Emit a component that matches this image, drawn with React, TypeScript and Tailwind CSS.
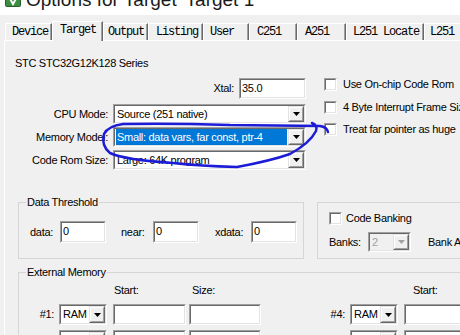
import React from "react";

type BoxProps = {
  className?: string;
  inner?: string;
  children?: React.ReactNode;
};

// classic win32 sunken edge
function Sunken({ className = "", inner = "", children }: BoxProps) {
  return (
    <div className={`shrink-0 border border-t-[#a0a0a0] border-l-[#a0a0a0] border-r-white border-b-white ${className}`}>
      <div className={`w-full h-full border border-t-[#696969] border-l-[#696969] border-r-[#e3e3e3] border-b-[#e3e3e3] ${inner}`}>
        {children}
      </div>
    </div>
  );
}

function DropButton({ disabled }: { disabled?: boolean }) {
  return (
    <div className="w-[16px] h-full shrink-0 border border-t-[#e3e3e3] border-l-[#e3e3e3] border-r-[#696969] border-b-[#696969] bg-[#f0f0f0]">
      <div className="w-full h-full border border-t-white border-l-white border-r-[#a0a0a0] border-b-[#a0a0a0] flex items-center justify-center">
        <svg width="7" height="4" viewBox="0 0 7 4">
          <path d="M0 0h7L3.5 4z" fill={disabled ? "#a0a0a0" : "#000"} />
        </svg>
      </div>
    </div>
  );
}

type ComboProps = {
  className: string;
  text: string;
  selected?: boolean;
  disabled?: boolean;
};

function Combo({ className, text, selected, disabled }: ComboProps) {
  return (
    <Sunken className={className} inner={`flex ${disabled ? "bg-[#f0f0f0]" : "bg-white"}`}>
      <div
        className={`flex-1 min-w-0 flex items-center mx-[1px] pl-[1px] whitespace-nowrap overflow-hidden ${
          selected ? "bg-[#0078d7] text-white" : ""
        } ${disabled ? "text-[#a0a0a0]" : ""}`}
      >
        {text}
      </div>
      <DropButton disabled={disabled} />
    </Sunken>
  );
}

function Input({ className, text = "" }: { className: string; text?: string }) {
  return (
    <Sunken className={className} inner="bg-white flex items-center pl-[1px] pb-[1px]">
      {text}
    </Sunken>
  );
}

function Check() {
  return <Sunken className="w-[13px] h-[13px]" inner="bg-white" />;
}

function Legend({ children }: { children: React.ReactNode }) {
  return <div className="-mt-[7px] ml-[7px] px-[1px] w-fit h-[13px] bg-[#f0f0f0] whitespace-nowrap">{children}</div>;
}

const tabs = [
  { label: "Device", cls: "w-[47px] pl-[6px]" },
  { label: "Target", cls: "w-[51px] pl-[7px]", active: true },
  { label: "Output", cls: "w-[45px] pl-[4px]" },
  { label: "Listing", cls: "w-[55px] pl-[7px]" },
  { label: "User", cls: "w-[46px] pl-[6px]" },
  { label: "C251", cls: "w-[48px] pl-[7px]" },
  { label: "A251", cls: "w-[49px] pl-[7px]" },
  { label: "L251 Locate", cls: "w-[78px] pl-[6px]" },
  { label: "L251", cls: "w-[50px] pl-[5px]" },
];

export default function App() {
  return (
    <div className="relative w-[460px] h-[335px] overflow-hidden bg-[#f0f0f0] font-['Liberation_Sans',Arial,sans-serif] text-[11px] leading-[13px] tracking-[-0.3px] text-black">
      {/* Title bar (cut off at the top) */}
      <div className="h-[15px] bg-white overflow-hidden flex items-start">
        <svg className="ml-[5px] -mt-[9px] shrink-0" width="16" height="16" viewBox="0 0 16 16">
          <rect x="0.5" y="0.5" width="15" height="15" rx="1" fill="#3c8d3f" stroke="#25602a" />
          <path d="M4 6l4 7 4-7" stroke="#fff" strokeWidth="2" fill="none" />
        </svg>
        <span className="ml-[5px] -mt-[10px] text-[19px] leading-[20px] tracking-normal text-[#1a1a1a] whitespace-nowrap">
          Options for Target 'Target 1'
        </span>
      </div>

      {/* Tabs */}
      <div className="mt-[6px] pl-[5px] h-[19px] flex items-end font-['Liberation_Mono',monospace] text-[12px] tracking-[-1.2px]">
        {tabs.map((t) => (
          <div
            key={t.label}
            className={`${t.cls} shrink-0 flex items-center whitespace-nowrap bg-[#f0f0f0] border-t border-l border-r border-t-white border-l-white border-r-[#696969] shadow-[inset_-1px_0_0_#a0a0a0] ${
              t.active ? "relative z-10 h-[20px] -mb-[1px] pb-[3px]" : "h-[17px]"
            }`}
          >
            {t.label}
          </div>
        ))}
      </div>

      {/* Tab page */}
      <div className="ml-[4px] h-[300px] border-l border-t border-white">
        <div className="ml-[10px] mt-[16px] h-[13px] whitespace-nowrap">STC STC32G12K128 Series</div>

        <div className="mt-[8px] flex">
          <div className="w-[301px] shrink-0 flex flex-col">
            <div className="h-[21px] flex justify-end items-center gap-[5px]">
              <span>Xtal:</span>
              <Input className="w-[67px] h-[21px]" text="35.0" />
            </div>
            <div className="mt-[5px] h-[20px] flex items-center">
              <span className="w-[103px] text-right">CPU Mode:</span>
              <Combo className="ml-[5px] w-[193px] h-[20px]" text="Source (251 native)" />
            </div>
            <div className="mt-[3px] h-[20px] flex items-center">
              <span className="w-[103px] text-right">Memory Model:</span>
              <Combo className="ml-[5px] w-[193px] h-[20px]" text="Small: data vars, far const, ptr-4" selected />
            </div>
            <div className="mt-[3px] h-[20px] flex items-center">
              <span className="w-[103px] text-right">Code Rom Size:</span>
              <Combo className="ml-[5px] w-[193px] h-[20px]" text="Large: 64K program" />
            </div>
          </div>

          <div className="ml-[18px] flex flex-col whitespace-nowrap">
            <div className="h-[13px] flex items-center gap-[6px]">
              <Check />
              <span>Use On-chip Code Rom</span>
            </div>
            <div className="mt-[10px] h-[13px] flex items-center gap-[6px]">
              <Check />
              <span>4 Byte Interrupt Frame Size</span>
            </div>
            <div className="mt-[9px] h-[13px] flex items-center gap-[6px]">
              <Check />
              <span>Treat far pointer as huge</span>
            </div>
          </div>
        </div>

        {/* Data Threshold / Code Banking */}
        <div className="mt-[32px] flex">
          <div className="ml-[13px] w-[286px] h-[57px] shrink-0 border border-[#d5d5d5]">
            <Legend>Data Threshold</Legend>
            <div className="mt-[12px] pl-[11px] h-[22px] flex items-center">
              <span className="w-[30px]">data:</span>
              <Input className="w-[46px] h-[22px]" text="0" />
              <span className="ml-[15px] w-[32px]">near:</span>
              <Input className="w-[46px] h-[22px]" text="0" />
              <span className="ml-[16px] w-[36px]">xdata:</span>
              <Input className="w-[46px] h-[22px]" text="0" />
            </div>
          </div>

          <div className="ml-[13px] w-[200px] h-[57px] shrink-0 border border-[#d5d5d5] whitespace-nowrap">
            <div className="mt-[9px] ml-[11px] h-[13px] flex items-center gap-[4px]">
              <Check />
              <span>Code Banking</span>
            </div>
            <div className="mt-[7px] ml-[11px] h-[20px] flex items-center">
              <span className="w-[39px]">Banks:</span>
              <Combo className="w-[43px] h-[20px]" text="2" disabled />
              <span className="ml-[17px]">Bank Area:</span>
            </div>
          </div>
        </div>

        {/* External Memory */}
        <div className="mt-[13px] ml-[13px] w-[460px] h-[80px] border border-[#d5d5d5] whitespace-nowrap">
          <Legend>External Memory</Legend>
          <div className="mt-[5px] h-[13px] flex">
            <span className="ml-[95px] w-[78px]">Start:</span>
            <span className="w-[221px]">Size:</span>
            <span>Start:</span>
          </div>
          <div className="mt-[7px] h-[21px] flex items-center">
            <span className="w-[38px] text-right">#1:</span>
            <Combo className="ml-[5px] w-[48px] h-[21px]" text="RAM" />
            <Input className="ml-[6px] w-[73px] h-[21px]" />
            <Input className="ml-[3px] w-[72px] h-[21px]" />
            <span className="w-[91px] text-right">#4:</span>
            <Combo className="ml-[5px] w-[48px] h-[21px]" text="RAM" />
            <Input className="ml-[6px] w-[73px] h-[21px]" />
          </div>
          <div className="mt-[5px] h-[21px] flex items-center">
            <span className="w-[38px] text-right">#2:</span>
            <Combo className="ml-[5px] w-[48px] h-[21px]" text="RAM" />
            <Input className="ml-[6px] w-[73px] h-[21px]" />
            <Input className="ml-[3px] w-[72px] h-[21px]" />
            <span className="w-[91px] text-right">#5:</span>
            <Combo className="ml-[5px] w-[48px] h-[21px]" text="RAM" />
            <Input className="ml-[6px] w-[73px] h-[21px]" />
          </div>
        </div>
      </div>

      {/* hand-drawn annotation */}
      <svg className="absolute left-0 top-0 pointer-events-none" width="460" height="335" viewBox="0 0 460 335">
        <path
          d="M328 132 Q327 127 320 126 L230 125 Q170 123 123 124 Q108 126 104 134 Q101 146 110 153 Q125 160 173 163 Q200 166 237 167 Q270 161 290 154 Q310 143 316 131 Q318 125 312 123"
          fill="none"
          stroke="#1c1cd8"
          strokeWidth="2.5"
          strokeLinecap="round"
          strokeLinejoin="round"
        />
      </svg>
    </div>
  );
}
